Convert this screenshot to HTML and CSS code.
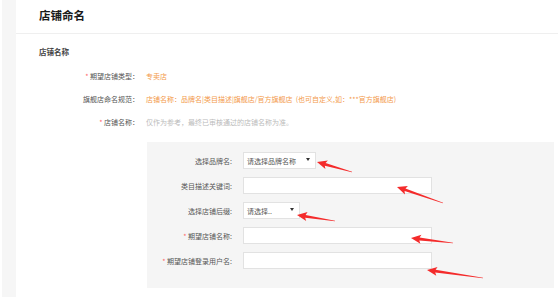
FILE: index.html
```html
<!DOCTYPE html>
<html lang="zh-CN">
  <head>
    <meta charset="UTF-8" />
    <meta name="viewport" content="width=device-width, initial-scale=1.0" />
    <title>店铺命名</title>
    <link rel="stylesheet" href="styles.css">
  </head>
  <body>
    <div class="page">
      <div class="side-strip"></div>

      <div class="main">
        <header class="page-header">
          <h1>店铺命名</h1>
        </header>

        <section class="section">
          <h2 class="section-title">店铺名称</h2>

          <div class="info-row">
            <span class="info-label"><i class="star">*</i> 期望店铺类型：</span>
            <span class="info-value orange">专卖店</span>
          </div>
          <div class="info-row">
            <span class="info-label">旗舰店命名规范：</span>
            <span class="info-value orange">店铺名称：品牌名|类目描述|旗舰店/官方旗舰店&nbsp;&nbsp;(也可自定义,如：***官方旗舰店)</span>
          </div>
          <div class="info-row">
            <span class="info-label"><i class="star">*</i> 店铺名称：</span>
            <span class="info-value muted">仅作为参考，最终已审核通过的店铺名称为准。</span>
          </div>

          <div class="form-panel">
            <div class="form-row">
              <label class="form-label">选择品牌名:</label>
              <div class="select select-brand">
                <span>请选择品牌名称</span>
                <svg class="caret" width="4" height="3" viewBox="0 0 4 3"><path d="M0 0h4L2 3z" fill="#333"/></svg>
              </div>
            </div>
            <div class="form-row">
              <label class="form-label">类目描述关键词:</label>
              <div class="text-input"></div>
            </div>
            <div class="form-row">
              <label class="form-label">选择店铺后缀:</label>
              <div class="select select-suffix">
                <span>请选择..</span>
                <svg class="caret" width="4" height="3" viewBox="0 0 4 3"><path d="M0 0h4L2 3z" fill="#333"/></svg>
              </div>
            </div>
            <div class="form-row">
              <label class="form-label"><i class="star">*</i> 期望店铺名称:</label>
              <div class="text-input"></div>
            </div>
            <div class="form-row">
              <label class="form-label"><i class="star">*</i> 期望店铺登录用户名:</label>
              <div class="text-input"></div>
            </div>
          </div>
        </section>
      </div>
    </div>

    <!-- red annotation arrows drawn over the form -->
    <svg class="arrows" width="558" height="299" viewBox="0 0 558 299">
      <g fill="#f42b2b">
        <polygon transform="translate(317 162) rotate(15.9)" points="0,0 10,-4.5 8.5,-1.4 36.4,-0.3 36.4,0.3 8.5,1.4 10,4.5" />
        <polygon transform="translate(397 187) rotate(19.2)" points="0,0 10,-4.5 8.5,-1.4 48.7,-0.3 48.7,0.3 8.5,1.4 10,4.5" />
        <polygon transform="translate(297 215) rotate(9)" points="0,0 10,-4.5 8.5,-1.4 38.5,-0.3 38.5,0.3 8.5,1.4 10,4.5" />
        <polygon transform="translate(411 238) rotate(6.8)" points="0,0 10,-4.5 8.5,-1.4 42.3,-0.3 42.3,0.3 8.5,1.4 10,4.5" />
        <polygon transform="translate(427 270) rotate(8.1)" points="0,0 10,-4.5 8.5,-1.4 56.6,-0.3 56.6,0.3 8.5,1.4 10,4.5" />
      </g>
    </svg>
  </body>
</html>
```

FILE: styles.css
```css
* {
  box-sizing: border-box;
  margin: 0;
  padding: 0;
}

body {
  font-family: "Noto Sans CJK SC", "Noto Sans", sans-serif;
  background-color: #fff;
  color: #555;
  position: relative;
  width: 558px;
  height: 299px;
  overflow: hidden;
}

.page {
  display: flex;
  align-items: flex-start;
}

.side-strip {
  width: 14px;
  height: 297px;
  margin-left: 2px;
  background-color: #f6f6f6;
}

.main {
  flex: 1;
}

.page-header {
  height: 34px;
  padding: 6px 0 0 23px;
  border-bottom: 1px solid #efefef;
}

.page-header h1 {
  font-size: 11.5px;
  line-height: 18px;
  font-weight: 700;
  color: #1a1a1a;
}

.section {
  padding: 0 4px 0 23px;
}

.section-title {
  margin-top: 13px;
  font-size: 7.5px;
  line-height: 10px;
  font-weight: 700;
  color: #444;
}

.section-title + .info-row {
  margin-top: 13px;
}

.info-row {
  display: flex;
  height: 23px;
  font-size: 7px;
  line-height: 12px;
}

.info-label {
  width: 100px;
  text-align: right;
  color: #555;
}

.info-value {
  margin-left: 7px;
  white-space: nowrap;
}

.orange {
  color: #f39a4c;
}

.muted {
  color: #bbb;
}

.star {
  font-style: normal;
  color: #f66;
}

.form-panel {
  margin: 3px 0 0 108px;
  padding: 10px 0 19px;
  background-color: #f5f5f5;
  display: flex;
  flex-direction: column;
  gap: 8px;
}

.form-row {
  display: flex;
  align-items: center;
  height: 17px;
}

.form-label {
  width: 85px;
  margin-right: 11px;
  text-align: right;
  font-size: 7px;
  color: #555;
}

.select,
.text-input {
  height: 17px;
  background-color: #fff;
  border: 1px solid #e2e2e2;
}

.select {
  display: flex;
  align-items: center;
  justify-content: space-between;
  padding: 0 5px 0 3px;
  font-size: 7px;
  color: #555;
}

.select-brand {
  width: 73px;
}

.select-suffix {
  width: 57px;
}

.caret {
  margin-top: -2px;
}

.text-input {
  width: 189px;
}

.arrows {
  position: absolute;
  top: 0;
  left: 0;
  pointer-events: none;
}
```
